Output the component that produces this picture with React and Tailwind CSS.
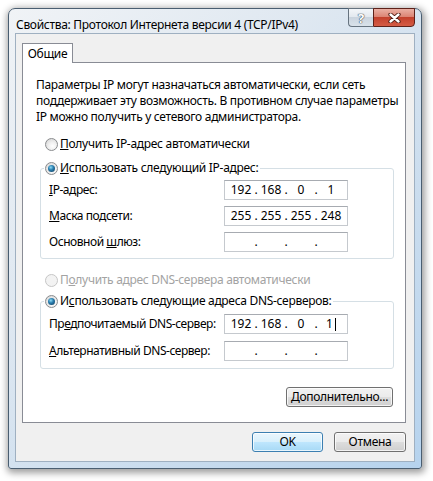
import { Fragment } from 'react';

function Radio({ checked, disabled }) {
  return (
    <span
      className={`flex h-[13px] w-[13px] shrink-0 items-center justify-center rounded-full border ${
        disabled
          ? 'border-[#c6c6c6] bg-[#f3f3f3]'
          : 'border-[#8a8c8e] bg-[radial-gradient(circle_at_60%_65%,#ffffff_0%,#f0f0f0_40%,#cfcfcf_100%)]'
      }`}
    >
      {checked && (
        <span className="h-[7px] w-[7px] rounded-full bg-[radial-gradient(circle_at_40%_35%,#8fdcf5_0%,#2a7fb0_40%,#0f3654_100%)]" />
      )}
    </span>
  );
}

function RadioRow({ checked, disabled, children, className = '' }) {
  return (
    <div className={`flex h-4 items-center gap-[2px] whitespace-nowrap ${disabled ? 'text-[#a3a3a3]' : ''} ${className}`}>
      <Radio checked={checked} disabled={disabled} />
      <span>{children}</span>
    </div>
  );
}

function IpField({ parts = ['', '', '', ''], caret }) {
  return (
    <div className="flex h-5 w-[124px] shrink-0 items-center border border-[#c5c9ce] border-t-[#a7abb1] bg-white pl-[5px] tracking-normal">
      {parts.map((p, i) => (
        <Fragment key={i}>
          {i > 0 && <span className="w-2 text-center">.</span>}
          <span className="flex w-[22px] items-center justify-center">
            {p}
            {caret && i === 3 && <span className="ml-[2px] h-[13px] w-px bg-black" />}
          </span>
        </Fragment>
      ))}
    </div>
  );
}

function Field({ label, parts, caret }) {
  return (
    <div className="flex items-center pl-2">
      <span className="w-[175px] shrink-0 whitespace-nowrap tracking-[-0.45px]">{label}</span>
      <IpField parts={parts} caret={caret} />
    </div>
  );
}

function Button({ children, primary, className = '' }) {
  return (
    <button
      className={`flex h-5 items-center justify-center whitespace-nowrap rounded-[3px] border shadow-[inset_0_0_0_1px_rgba(255,255,255,0.75)] ${
        primary
          ? 'border-[#3c7fb1] bg-[linear-gradient(to_bottom,#eaf6fd_0%,#d9f0fc_48%,#bee6fd_52%,#a7d9f5_100%)]'
          : 'border-[#707070] bg-[linear-gradient(to_bottom,#f2f2f2_0%,#ebebeb_48%,#dddddd_52%,#cfcfcf_100%)]'
      } ${className}`}
    >
      {children}
    </button>
  );
}

export default function App() {
  return (
    <div className="h-[481px] w-[433px] bg-white pl-2 pt-2 font-['Noto_Sans',sans-serif] text-[12px] leading-4 tracking-[-0.3px] text-black">
      <div className="flex w-[414px] flex-col rounded-t-[7px] rounded-b-[3px] border border-[#4a5e71] bg-[linear-gradient(135deg,#f0f3f6_0%,#dfe8f1_35%,#c9dcee_70%,#b6d3ee_100%)] shadow-[1px_2px_7px_2px_rgba(0,0,0,0.38)]">
        {/* caption */}
        <div className="flex h-6 items-start">
          <span className="mt-[8px] whitespace-nowrap pl-[7px]">Свойства: Протокол Интернета версии 4 (TCP/IPv4)</span>
          <div className="-mt-px mr-[6px] ml-auto flex">
            <div className="flex h-[19px] w-[25px] items-center justify-center rounded-bl-[4px] border border-r-0 border-[#66737f] bg-[linear-gradient(to_bottom,#f3f6f9_0%,#e3e9ef_45%,#cad4de_50%,#d9e2ea_100%)]">
              <span className="text-[13px] font-bold text-white [text-shadow:0_0_1px_#3f4d5b,0_0_1px_#3f4d5b,0_0_1px_#3f4d5b]">?</span>
            </div>
            <div className="flex h-[19px] w-[42px] items-center justify-center rounded-br-[4px] border border-[#5d2119] bg-[linear-gradient(to_bottom,#eab0a4_0%,#dc8575_45%,#c3412d_50%,#d45c45_100%)]">
              <svg width="13" height="10" viewBox="0 0 13 10">
                <path d="M2.5 1.5 L10.5 8.5 M10.5 1.5 L2.5 8.5" stroke="#4d1a12" strokeWidth="4.2" strokeLinecap="round" />
                <path d="M2.5 1.5 L10.5 8.5 M10.5 1.5 L2.5 8.5" stroke="#ffffff" strokeWidth="2.4" strokeLinecap="round" />
              </svg>
            </div>
          </div>
        </div>

        {/* client area */}
        <div className="mx-[6px] mb-[6px] flex flex-col border border-[#9fb0c1] bg-[#f0f0f0] pt-[9px] pr-[8px] pb-[9px] pl-[6px]">
          <div className="flex">
            <div className="relative z-10 -mb-px flex h-5 w-[51px] items-center justify-center border border-b-0 border-[#898c95] bg-white">
              Общие
            </div>
          </div>

          <div className="flex flex-col border border-[#898c95] bg-white pt-[14px] pb-[15px]">
            <p className="whitespace-nowrap px-[13px]">
              Параметры IP могут назначаться автоматически, если сеть
              <br />
              поддерживает эту возможность. В противном случае параметры
              <br />
              IP можно получить у сетевого администратора.
            </p>

            <RadioRow className="mt-[11px] ml-[22px]">
              <u>П</u>олучить IP-адрес автоматически
            </RadioRow>

            <div className="mt-4 mr-[11px] ml-[17px] flex flex-col rounded-[3px] border border-[#d5dfe5] pb-[6px]">
              <RadioRow checked className="-mt-[9px] ml-[3px] self-start bg-white pr-[2px] pl-px">
                <u>И</u>спользовать следующий IP-адрес:
              </RadioRow>
              <div className="mt-1 flex flex-col gap-[6px]">
                <Field label={<><u>I</u>P-адрес:</>} parts={['192', '168', '0', '1']} />
                <Field label={<><u>М</u>аска подсети:</>} parts={['255', '255', '255', '248']} />
                <Field label={<>Основной <u>ш</u>люз:</>} />
              </div>
            </div>

            <RadioRow disabled className="mt-[13px] ml-[22px]">
              П<u>о</u>лучить адрес DNS-сервера автоматически
            </RadioRow>

            <div className="mt-[13px] mr-[11px] ml-[17px] flex flex-col rounded-[3px] border border-[#d5dfe5] pb-[7px]">
              <RadioRow checked className="-mt-[9px] ml-[3px] self-start bg-white pr-[2px] pl-px">
                И<u>с</u>пользовать следующие адреса DNS-серверов:
              </RadioRow>
              <div className="mt-[5px] flex flex-col gap-[7px]">
                <Field label={<>Пр<u>е</u>дпочитаемый DNS-сервер:</>} parts={['192', '168', '0', '1']} caret />
                <Field label={<><u>А</u>льтернативный DNS-сервер:</>} />
              </div>
            </div>

            <Button className="mt-[18px] mr-[12px] w-[107px] self-end">
              <u>Д</u>ополнительно...
            </Button>
          </div>

          <div className="mt-[9px] flex justify-end gap-[11px]">
            <Button primary className="w-[71px]">OK</Button>
            <Button className="w-[72px]">Отмена</Button>
          </div>
        </div>
      </div>
    </div>
  );
}
